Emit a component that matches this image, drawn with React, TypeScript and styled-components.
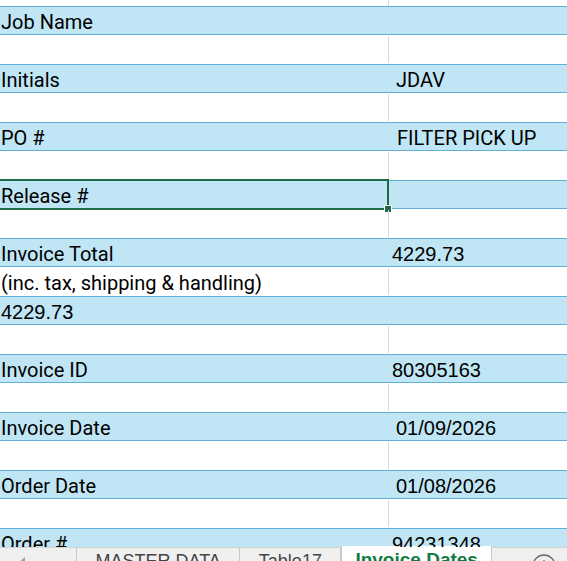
import React from 'react';
import styled, { createGlobalStyle, css } from 'styled-components';

const GlobalStyle = createGlobalStyle`
  html, body {
    margin: 0;
    padding: 0;
    background: #ffffff;
  }
`

const Page = styled.div`
  height: 561px;
  overflow: hidden;
  display: grid;
  grid-template-rows: 547px 48px;
  font-family: Roboto, 'Liberation Sans', sans-serif;
  color: #000;
`

const Sheet = styled.div`
  overflow: hidden;
  display: flex;
  flex-direction: column;
`

const Row = styled.div<{ $band?: boolean; $h?: number }>`
  box-sizing: border-box;
  height: ${p => p.$h ?? 29}px;
  flex-shrink: 0;
  display: grid;
  grid-template-columns: 389px 1fr;
  border-top: ${p => (p.$h ? 0 : 1)}px solid transparent;
  border-bottom: ${p => (p.$h ? 0 : 1)}px solid transparent;
  ${p => p.$band && css`
    background: #c0e6f5;
    border-top-color: #5fb0d9;
    border-bottom-color: #5fb0d9;
  `}
`

const Cell = styled.div<{ $num?: boolean; $indent?: number; $divider?: boolean }>`
  position: relative;
  box-sizing: border-box;
  display: flex;
  align-items: flex-end;
  padding: 0 0 2px ${p => p.$indent ?? 1}px;
  font-family: ${p => (p.$num ? "'Liberation Sans', Arial" : "Roboto, 'Liberation Sans'")}, sans-serif;
  font-size: 20px;
  line-height: 20px;
  white-space: nowrap;
  border-right: 1px solid ${p => (p.$divider ? '#d9d9d9' : 'transparent')};
`

const Selection = styled.div`
  position: absolute;
  top: -2px;
  bottom: -2px;
  left: -2px;
  right: -1px;
  border: 2px solid #1e6b45;
  pointer-events: none;
`

const FillHandle = styled.div`
  position: absolute;
  right: -4px;
  bottom: -4px;
  width: 6px;
  height: 6px;
  background: #1e6b45;
  outline: 1px solid #ffffff;
`

const TabBar = styled.div`
  display: flex;
  align-items: stretch;
  background: #f0f0f0;
  border-top: 1px solid #d2d2d2;
  font-family: 'Liberation Sans', Arial, sans-serif;
  font-size: 18px;
  line-height: 18px;
  color: #444;
`

const NavArea = styled.div`
  width: 77px;
  display: flex;
  align-items: flex-start;
  padding: 9px 0 0 17px;
  box-sizing: border-box;
  border-right: 1px solid #c8c8c8;
`

const Tab = styled.div<{ $active?: boolean }>`
  padding: 4px 18.5px 0;
  border-right: 1px solid #c8c8c8;
  white-space: nowrap;
  ${p => p.$active && css`
    background: #ffffff;
    margin-top: -2px;
    padding: 5px 13px 0;
    color: #107c41;
    font-weight: bold;
    font-size: 19px;
    border-left: 1px solid #c8c8c8;
  `}
`

const AddSheet = styled.div`
  padding: 6px 0 0 40px;
  color: #666;
`

type Line = {
  a?: string;
  b?: string;
  aNum?: boolean;
  bNum?: boolean;
  bIndent?: number;
  band?: boolean;
  selected?: boolean;
};

const lines: Line[] = [
  { a: 'Job Name', band: true },
  {},
  { a: 'Initials', b: 'JDAV', bIndent: 7, band: true },
  {},
  { a: 'PO #', b: 'FILTER PICK UP', bIndent: 8, band: true },
  {},
  { a: 'Release #', band: true, selected: true },
  {},
  { a: 'Invoice Total', b: '4229.73', bNum: true, bIndent: 3, band: true },
  { a: '(inc. tax, shipping & handling)' },
  { a: '4229.73', aNum: true, band: true },
  {},
  { a: 'Invoice ID', b: '80305163', bNum: true, bIndent: 3, band: true },
  {},
  { a: 'Invoice Date', b: '01/09/2026', bNum: true, bIndent: 7, band: true },
  {},
  { a: 'Order Date', b: '01/08/2026', bNum: true, bIndent: 7, band: true },
  {},
  { a: 'Order #', b: '94231348', bNum: true, bIndent: 3, band: true },
  {},
];

const App: React.FC = () => {
  return (
    <Page>
      <GlobalStyle />
      <Sheet>
        <Row $h={6}>
          <Cell $divider />
          <Cell />
        </Row>
        {lines.map((line, i) => (
          <Row key={i} $band={line.band}>
            <Cell $num={line.aNum} $divider={!line.band}>
              {line.a}
              {line.selected && (
                <Selection>
                  <FillHandle />
                </Selection>
              )}
            </Cell>
            <Cell $num={line.bNum} $indent={line.bIndent}>{line.b}</Cell>
          </Row>
        ))}
      </Sheet>
      <TabBar>
        <NavArea>
          <svg width="10" height="12" viewBox="0 0 10 12">
            <path d="M8 0 L1 6 L8 12 Z" fill="#a0a0a0" />
          </svg>
        </NavArea>
        <Tab>MASTER DATA</Tab>
        <Tab>Table17</Tab>
        <Tab $active>Invoice Dates</Tab>
        <AddSheet>
          <svg width="24" height="24" viewBox="0 0 24 24">
            <circle cx="12" cy="12" r="11" fill="none" stroke="#6a6a6a" strokeWidth="1.3" />
            <path d="M12 6 V18 M6 12 H18" stroke="#6a6a6a" strokeWidth="1.3" />
          </svg>
        </AddSheet>
      </TabBar>
    </Page>
  );
};

export default App;
